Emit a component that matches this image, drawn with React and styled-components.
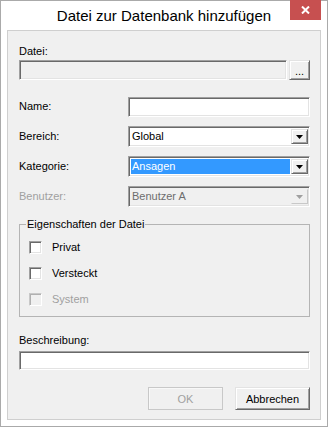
import React from 'react'
import styled, { createGlobalStyle, css } from 'styled-components'

const GlobalStyle = createGlobalStyle`
  html, body {
    margin: 0;
    padding: 0;
    background: #ffffff;
  }
  * {
    box-sizing: border-box;
  }
`

const sunken = css`
  border: 1px solid;
  border-color: #a0a0a0 #ffffff #ffffff #a0a0a0;
  box-shadow: inset 1px 1px 0 #696969, inset -1px -1px 0 #e3e3e3;
`

const raised = css`
  border: 1px solid;
  border-color: #e3e3e3 #696969 #696969 #e3e3e3;
  box-shadow: inset 1px 1px 0 #ffffff, inset -1px -1px 0 #a0a0a0;
`

const Window = styled.div`
  width: 328px;
  height: 427px;
  border: 1px solid #aaaaaa;
  background: #ffffff;
  padding: 0 6px 6px 6px;
  display: flex;
  flex-direction: column;
  font-family: "Liberation Sans", Arial, sans-serif;
  font-size: 11px;
  color: #000;
`

const TitleBar = styled.div`
  height: 29px;
  display: grid;
  grid-template-columns: 31px 1fr 31px;
  align-items: start;
`

const Title = styled.div`
  grid-column: 2;
  text-align: center;
  font-size: 15px;
  line-height: 29px;
  color: #000;
`

const CloseButton = styled.div`
  grid-column: 3;
  height: 20px;
  margin-top: -1px;
  background: #c75050;
  display: flex;
  align-items: center;
  justify-content: center;
`

const Client = styled.div`
  flex: 1;
  background: #f0f0f0;
  border: 1px solid #cfcfcf;
  padding: 14px 10px 0 11px;
  display: flex;
  flex-direction: column;
`

const Label = styled.div`
  line-height: 13px;
  height: 13px;
  white-space: nowrap;
  color: ${p => (p.$disabled ? '#a0a0a0' : '#000')};
  margin-top: ${p => p.$top || 0}px;
`

const FileRow = styled.div`
  display: flex;
  gap: 2px;
  margin-top: 2px;
  height: 20px;
`

const TextBox = styled.div`
  ${sunken};
  flex: ${p => (p.$grow ? 1 : 'none')};
  height: ${p => p.$h || 20}px;
  margin-top: ${p => p.$top || 0}px;
  background: ${p => (p.$readonly ? '#f0f0f0' : '#ffffff')};
`

const SmallButton = styled.div`
  ${raised};
  width: 21px;
  height: 20px;
  background: #f0f0f0;
  display: flex;
  align-items: flex-end;
  justify-content: center;
  padding-bottom: 3px;
  line-height: 10px;
`

const FormGrid = styled.div`
  display: grid;
  grid-template-columns: 109px 1fr;
  grid-auto-rows: 21px;
  row-gap: 9px;
  margin-top: 16px;
  align-items: center;
`

const Combo = styled.div`
  ${sunken};
  height: 21px;
  background: ${p => (p.$disabled ? '#f0f0f0' : '#ffffff')};
  padding: 2px 1px 2px 2px;
  display: flex;
  align-items: stretch;
`

const ComboText = styled.div`
  flex: 1;
  line-height: 15px;
  padding-left: 1px;
  margin-right: 1px;
  background: ${p => (p.$selected ? '#3399ff' : 'transparent')};
  color: ${p => (p.$selected ? '#ffffff' : p.$disabled ? '#6d6d6d' : '#000')};
`

const ArrowButton = styled.div`
  ${raised};
  width: 17px;
  background: #f0f0f0;
  display: flex;
  align-items: center;
  justify-content: center;
  ${p => p.$disabled && css`
    border-color: #f0f0f0 #c8c8c8 #c8c8c8 #f0f0f0;
    box-shadow: none;
  `}
`

const Group = styled.fieldset`
  margin: 11px 0 0 0;
  padding: 0 0 10px 9px;
  border: 1px solid #b4b4b4;
  min-width: 0;
`

const Legend = styled.legend`
  margin-left: -3px;
  padding: 0 1px;
  line-height: 13px;
`

const CheckRow = styled.label`
  display: flex;
  align-items: center;
  gap: 10px;
  height: 13px;
  margin-top: ${p => p.$top}px;
  color: ${p => (p.$disabled ? '#a0a0a0' : '#000')};
  line-height: 13px;
`

const CheckBox = styled.span`
  width: 13px;
  height: 13px;
  ${sunken};
  background: ${p => (p.$disabled ? '#f0f0f0' : '#ffffff')};
  ${p => p.$disabled && css`
    border-color: #c8c8c8 #ffffff #ffffff #c8c8c8;
    box-shadow: inset 1px 1px 0 #b0b0b0, inset -1px -1px 0 #f0f0f0;
  `}
`

const ButtonRow = styled.div`
  display: flex;
  justify-content: flex-end;
  gap: 12px;
  margin-top: 17px;
`

const Button = styled.div`
  width: 75px;
  height: 23px;
  background: #f0f0f0;
  display: flex;
  align-items: center;
  justify-content: center;
  ${p => p.$disabled
    ? css`
        border: 1px solid #c8c8c8;
        color: #a0a0a0;
        box-shadow: inset 1px 1px 0 #f8f8f8;
      `
    : raised};
`

const Arrow = ({ disabled }) => (
  <svg width="7" height="4" viewBox="0 0 7 4">
    <polygon points="0,0 7,0 3.5,4" fill={disabled ? '#a0a0a0' : '#000'} />
  </svg>
)

const Select = ({ value, selected, disabled }) => (
  <Combo $disabled={disabled}>
    <ComboText $selected={selected} $disabled={disabled}>{value}</ComboText>
    <ArrowButton $disabled={disabled}>
      <Arrow disabled={disabled} />
    </ArrowButton>
  </Combo>
)

const App = () => {
  return (
    <>
      <GlobalStyle />
      <Window>
        <TitleBar>
          <Title>Datei zur Datenbank hinzufügen</Title>
          <CloseButton>
            <svg width="9" height="8" viewBox="0 0 9 8">
              <path d="M1 0.5 L8 7.5 M8 0.5 L1 7.5" stroke="#fff" strokeWidth="2" />
            </svg>
          </CloseButton>
        </TitleBar>
        <Client>
          <Label>Datei:</Label>
          <FileRow>
            <TextBox $grow $readonly />
            <SmallButton>...</SmallButton>
          </FileRow>

          <FormGrid>
            <Label>Name:</Label>
            <TextBox $h={20} />
            <Label>Bereich:</Label>
            <Select value="Global" />
            <Label>Kategorie:</Label>
            <Select value="Ansagen" selected />
            <Label $disabled>Benutzer:</Label>
            <Select value="Benutzer A" disabled />
          </FormGrid>

          <Group>
            <Legend>Eigenschaften der Datei</Legend>
            <CheckRow $top={10}><CheckBox />Privat</CheckRow>
            <CheckRow $top={13}><CheckBox />Versteckt</CheckRow>
            <CheckRow $top={13} $disabled><CheckBox $disabled />System</CheckRow>
          </Group>

          <Label $top={17}>Beschreibung:</Label>
          <TextBox $top={4} $h={19} />

          <ButtonRow>
            <Button $disabled>OK</Button>
            <Button>Abbrechen</Button>
          </ButtonRow>
        </Client>
      </Window>
    </>
  )
}

export default App
